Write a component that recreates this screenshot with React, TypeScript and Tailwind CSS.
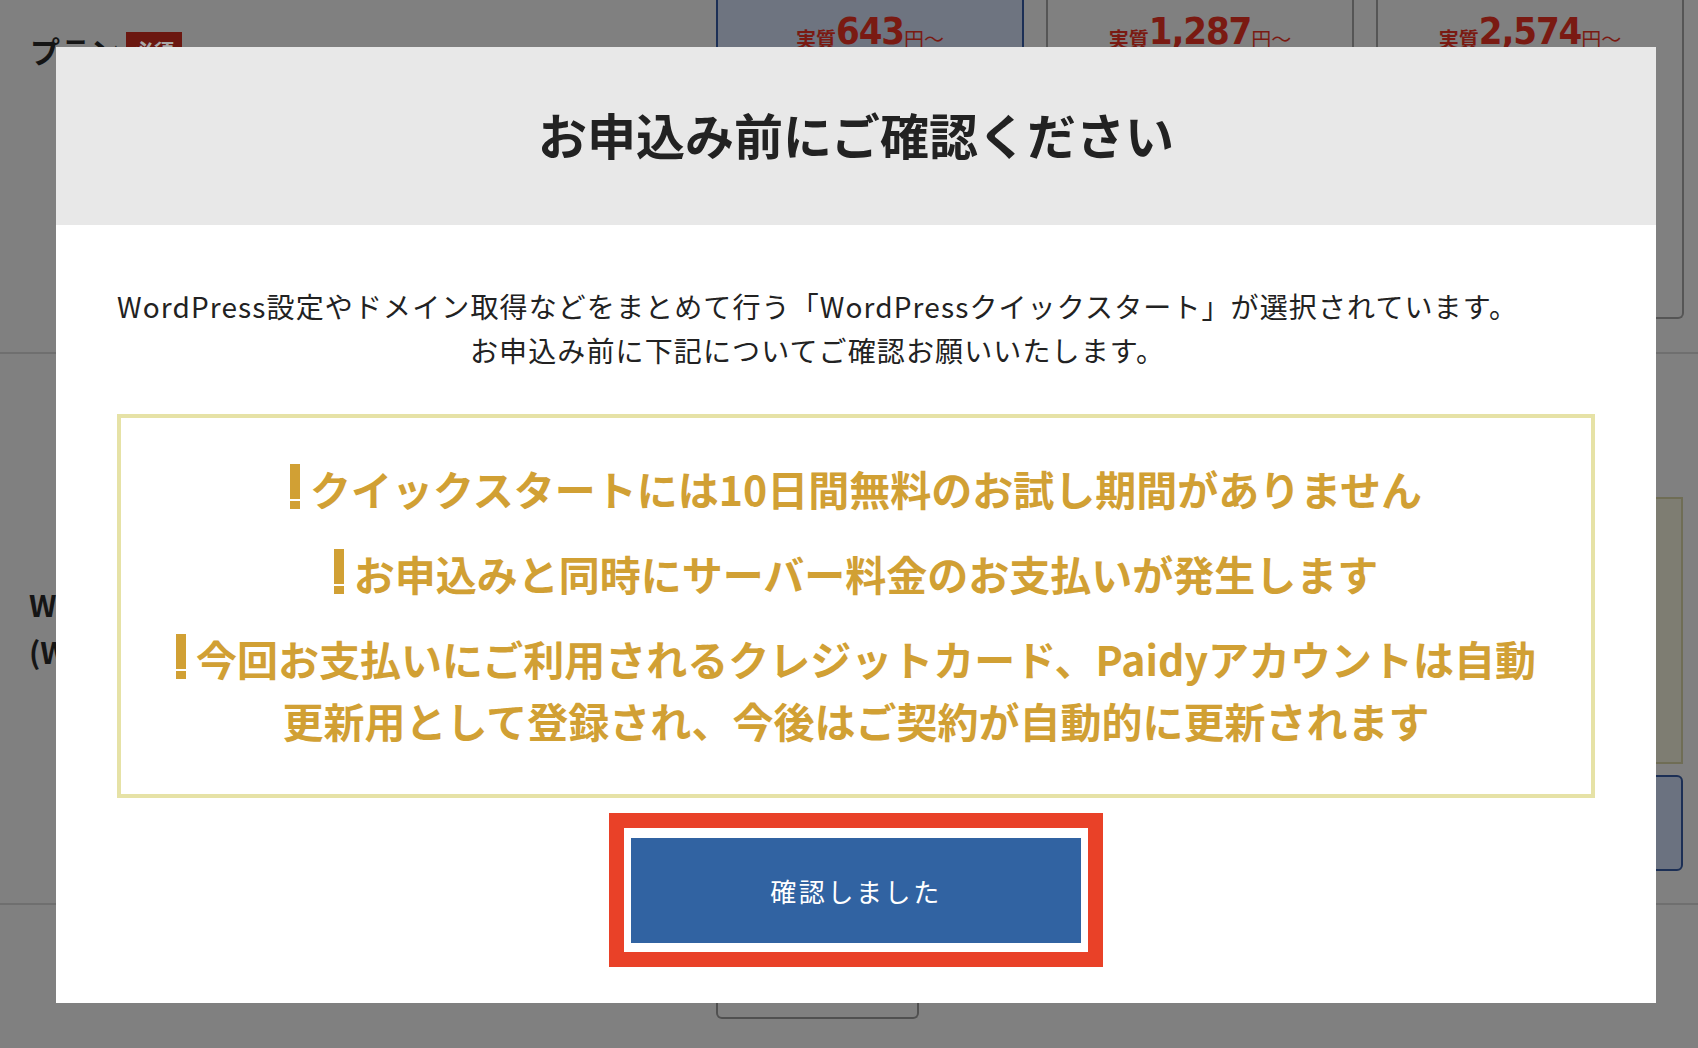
import React from "react";

const plans = [
  { price: "643", selected: true },
  { price: "1,287", selected: false },
  { price: "2,574", selected: false },
];

const notes = [
  ["クイックスタートには10日間無料のお試し期間がありません"],
  ["お申込みと同時にサーバー料金のお支払いが発生します"],
  ["今回お支払いにご利用されるクレジットカード、Paidyアカウントは自動", "更新用として登録され、今後はご契約が自動的に更新されます"],
];

function Bang() {
  return (
    <span className="inline-block w-[10px] mr-[10px] align-[-3px]">
      <span className="block w-[10px] h-[35px] bg-[#d1a034]" />
      <span className="block w-[10px] h-[8px] mt-[2px] bg-[#d1a034]" />
    </span>
  );
}

function Price({ price }: { price: string }) {
  return (
    <div className="flex items-end justify-center text-[#7a1a12] leading-none">
      <span className="text-[20px] font-bold mb-[1px]">実質</span>
      <span className="text-[38px] font-bold font-['DejaVu_Sans_Condensed','Liberation_Sans',sans-serif] tracking-[-0.03em]">
        {price}
      </span>
      <span className="text-[20px] mb-[1px]">円〜</span>
    </div>
  );
}

export default function App() {
  return (
    <div className="relative w-[1698px] h-[1048px] overflow-hidden bg-[#808080] font-['Noto_Sans_CJK_JP','Noto_Sans',sans-serif]">
      {/* page behind the overlay */}
      <div className="flex h-[354px] border-b-2 border-[#6f6f6f]">
        <div className="w-[716px] pl-[30px] pt-[30px] flex items-start gap-[6px]">
          <span className="text-[30px] font-bold text-[#151515] leading-[40px]">プラン</span>
          <span className="mt-[2px] bg-[#6b1710] text-[#a9a9a9] text-[20px] font-bold px-[8px] py-[4px]">必須</span>
        </div>
        <div className="flex gap-[22px] items-start">
          {plans.map((p) => (
            <div
              key={p.price}
              className={
                p.selected
                  ? "w-[308px] h-[319px] pt-[12px] border-x-2 border-b-2 border-[#1c2f55] bg-[#6e7480] rounded-b-[6px]"
                  : "w-[308px] h-[319px] pt-[12px] border-x-2 border-b-2 border-[#555555] rounded-b-[6px]"
              }
            >
              <Price price={p.price} />
            </div>
          ))}
        </div>
      </div>

      <div className="flex h-[551px] border-b-2 border-[#6f6f6f]">
        <div className="w-[716px] pl-[29px] flex flex-col justify-center text-[30px] font-bold leading-[47px] text-[#151515] pb-[2px]">
          <span>WordPress</span>
          <span>(WP)</span>
        </div>
        <div className="flex flex-col pt-[143px] gap-[11px] w-[967px]">
          <div className="h-[267px] border-2 border-[#6f6d55] bg-[#7e7d72]" />
          <div className="h-[96px] border-2 border-[#1c2f55] bg-[#6b7280] rounded-[6px]" />
        </div>
      </div>

      <div className="flex">
        <div className="w-[716px]" />
        <div className="mt-[28px] w-[203px] h-[86px] border-x-2 border-b-2 border-[#505050] rounded-b-[6px]" />
      </div>

      {/* modal */}
      <div className="absolute left-[56px] top-[47px] w-[1600px] h-[956px] bg-white flex flex-col">
        <div className="h-[178px] bg-[#e8e8e8] flex items-center justify-center pb-[6px]">
          <h2 className="text-[49px] font-bold text-[#222222] leading-none">お申込み前にご確認ください</h2>
        </div>
        <div className="flex flex-col items-center px-[61px] pt-[59px]">
          <p className="self-start w-fit text-[28px] leading-[44px] text-[#222222] text-center tracking-[0.04em]">
            WordPress設定やドメイン取得などをまとめて行う「WordPressクイックスタート」が選択されています。
            <br />
            お申込み前に下記についてご確認お願いいたします。
          </p>
          <div className="mt-[42px] w-full border-[4px] border-[#e6e2a6] pt-[39px] pb-[43px] px-[36px] text-center text-[#d1a034] font-bold text-[41px] leading-[62px]">
            {notes.map((lines, i) => (
              <p key={i} className={i === 0 ? "" : "mt-[23px]"}>
                <Bang />
                {lines[0]}
                {lines[1] && (
                  <>
                    <br />
                    {lines[1]}
                  </>
                )}
              </p>
            ))}
          </div>
          <div className="mt-[15px] border-[15px] border-[#e94128] px-[7px] pt-[10px] pb-[9px]">
            <button className="w-[450px] h-[105px] bg-[#3163a2] text-white text-[26px] tracking-[0.1em]">
              確認しました
            </button>
          </div>
        </div>
      </div>
    </div>
  );
}
